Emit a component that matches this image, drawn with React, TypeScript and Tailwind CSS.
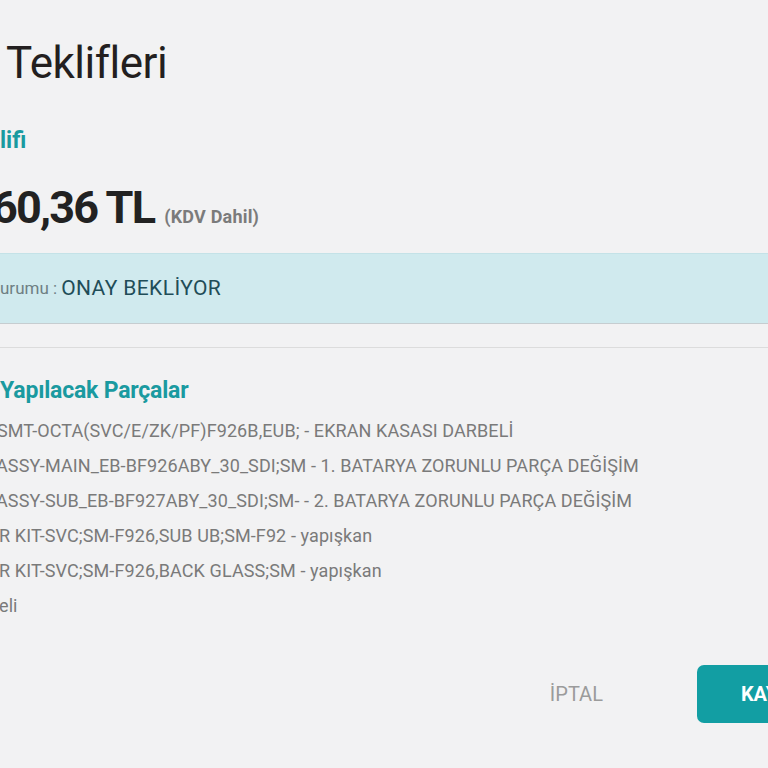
import React from 'react';

const parts = [
	{ text: 'SMT-OCTA(SVC/E/ZK/PF)F926B,EUB; - EKRAN KASASI DARBELİ', shift: '-ml-[3px]' },
	{ text: 'ASSY-MAIN_EB-BF926ABY_30_SDI;SM - 1. BATARYA ZORUNLU PARÇA DEĞİŞİM', shift: '-ml-[4px]' },
	{ text: 'ASSY-SUB_EB-BF927ABY_30_SDI;SM- - 2. BATARYA ZORUNLU PARÇA DEĞİŞİM', shift: '-ml-[4px]' },
	{ text: 'R KIT-SVC;SM-F926,SUB UB;SM-F92 - yapışkan', shift: '-ml-[1px]' },
	{ text: 'R KIT-SVC;SM-F926,BACK GLASS;SM - yapışkan', shift: '-ml-[1px]' },
	{ text: 'eli', shift: '-ml-[1px]' },
];

export default function App() {
	return (
		<div className="w-[768px] h-[768px] overflow-hidden bg-[#f2f2f3] font-['Roboto','Liberation_Sans',sans-serif]">
			<div className="w-[900px] pt-[40px]">
				<div className="h-[45px] flex items-center pl-[6px]">
					<h1 className="text-[44px] leading-none text-[#231f20] tracking-[-0.5px]">Teklifleri</h1>
				</div>

				<div className="h-[24px] mt-[43px] flex items-center">
					<h2 className="text-[23px] leading-none font-bold text-[#1a9aa0]">lifi</h2>
				</div>

				<div className="h-[45px] mt-[33px] flex items-baseline gap-[10px] leading-none">
					<span className="-ml-[8px] text-[45px] font-bold text-[#222222] tracking-[-1.8px] leading-[45px]">60,36 TL</span>
					<span className="text-[18px] font-bold text-[#7b7b7b] tracking-[0.2px]">(KDV Dahil)</span>
				</div>

				<div className="mt-[23px] h-[71px] bg-[#d0eaee] border-t border-t-[#c4e2e7] border-b border-b-[#c6cdd0] flex items-center">
					<span className="text-[17px] text-[#6e7f83]">urumu :</span>
					<span className="ml-[4px] text-[21px] text-[#1f4d58] tracking-[0.4px]">ONAY BEKLİYOR</span>
				</div>

				<div className="mt-[23px] h-px bg-[#dcdcdc]"></div>

				<div className="h-[24px] mt-[30px] flex items-center">
					<h2 className="text-[23px] leading-none font-bold text-[#1a9aa0] tracking-[-0.2px]">Yapılacak Parçalar</h2>
				</div>

				<ul className="mt-[11px]">
					{parts.map((p, i) => (
						<li key={i} className="h-[35px] flex items-center">
							<span className={`${p.shift} text-[18px] leading-none text-[#7a7a7a] whitespace-nowrap tracking-[0.1px]`}>{p.text}</span>
						</li>
					))}
				</ul>

				<div className="mt-[42px] flex justify-end items-center pr-[41px]">
					<button className="px-[24px] h-[58px] text-[20px] text-[#9b9b9b]">İPTAL</button>
					<button className="ml-[70px] h-[58px] px-[44px] rounded-[7px] bg-[#129ea3] text-white text-[20px] font-bold">KAYDET</button>
				</div>
			</div>
		</div>
	);
}
